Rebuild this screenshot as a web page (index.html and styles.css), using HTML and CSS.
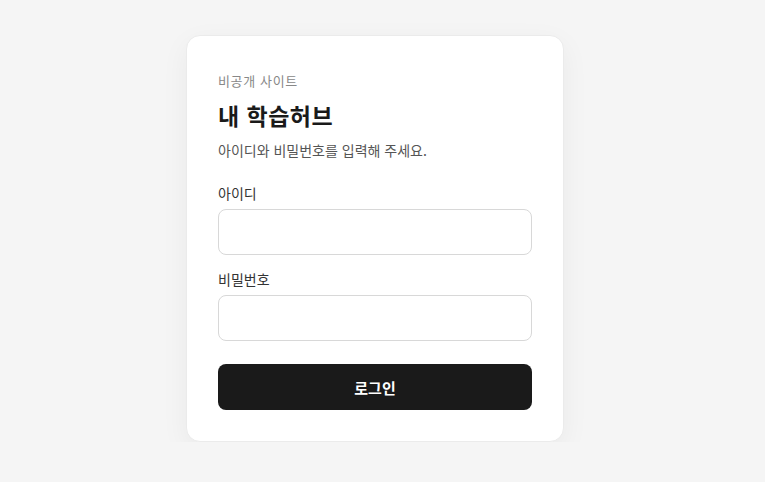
FILE: index.html
```html
<!DOCTYPE html>
<html lang="ko">
<head>
  <meta charset="UTF-8">
  <meta name="viewport" content="width=device-width, initial-scale=1.0">
  <title>내 학습허브</title>
  <link rel="stylesheet" href="styles.css">
</head>
<body>
  <div class="login-page">
    <form class="login-card">
      <p class="eyebrow">비공개 사이트</p>
      <h1 class="login-title">내 학습허브</h1>
      <p class="login-desc">아이디와 비밀번호를 입력해 주세요.</p>

      <div class="form-group">
        <label for="userId">아이디</label>
        <input type="text" id="userId">
      </div>

      <div class="form-group">
        <label for="userPw">비밀번호</label>
        <input type="password" id="userPw">
      </div>

      <button type="submit" class="btn-login">로그인</button>
    </form>
  </div>
</body>
</html>
```

FILE: styles.css
```css
:root {
  --bg: #f5f5f5;
  --text: #1a1a1a;
  --text-mid: #555;
  --text-light: #888;
  --border: #d8d8d8;
}

* {
  margin: 0;
  padding: 0;
  box-sizing: border-box;
  font-family: "Noto Sans CJK KR", "Noto Sans", sans-serif;
}

body {
  background-color: var(--bg);
  color: var(--text);
}

.login-page {
  display: flex;
  justify-content: center;
  padding: 35px 15px 0 0;
}

/* Card */
.login-card {
  width: 378px;
  background: white;
  border: 1px solid #ebebeb;
  border-radius: 14px;
  padding: 33px 31px 31px;
  box-shadow: 0 8px 28px rgba(0, 0, 0, 0.05);
}

.eyebrow {
  font-size: 13px;
  line-height: 24px;
  letter-spacing: 0.05em;
  color: var(--text-light);
}

.login-title {
  margin-top: 7px;
  font-size: 23px;
  line-height: 30px;
  font-weight: 700;
  letter-spacing: 0.02em;
  color: var(--text);
}

.login-desc {
  margin-top: 9px;
  font-size: 14px;
  line-height: 22px;
  color: var(--text-mid);
}

/* Fields */
.form-group {
  margin-top: 13px;
}

.login-desc + .form-group {
  margin-top: 21px;
}

label {
  display: block;
  font-size: 14px;
  line-height: 22px;
  color: #333;
  margin-bottom: 5px;
}

input[type="text"],
input[type="password"] {
  width: 100%;
  height: 46px;
  padding: 0 14px;
  border: 1px solid var(--border);
  border-radius: 8px;
  font-size: 15px;
  background: white;
}

input:focus {
  outline: none;
  border-color: var(--text);
}

/* Button */
.btn-login {
  display: block;
  width: 100%;
  height: 46px;
  margin-top: 23px;
  background-color: var(--text);
  color: white;
  border: none;
  border-radius: 8px;
  font-size: 15px;
  font-weight: 700;
  cursor: pointer;
}
```
